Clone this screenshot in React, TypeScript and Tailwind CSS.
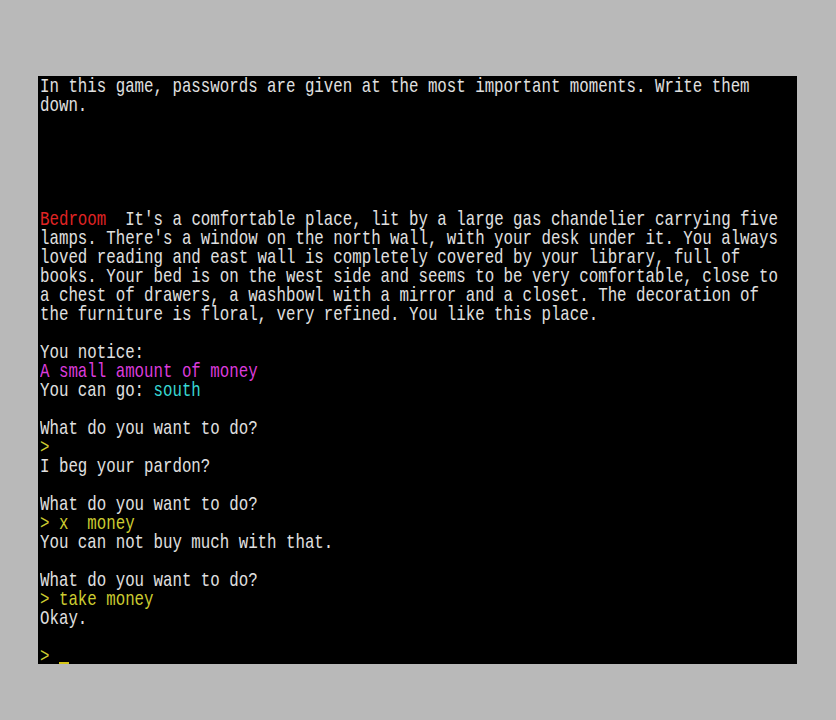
import React from "react";

type Seg = { t: string; c?: string };
type Line = Seg[];

const W = "text-[#e0e0e0]";
const RED = "text-[#e02424]";
const MAG = "text-[#dc3cdc]";
const CYAN = "text-[#38d8d4]";
const YEL = "text-[#cccc30]";

const lines: Line[] = [
  [{ t: "In this game, passwords are given at the most important moments. Write them" }],
  [{ t: "down." }],
  [],
  [],
  [],
  [],
  [],
  [{ t: "Bedroom", c: RED }, { t: "  It's a comfortable place, lit by a large gas chandelier carrying five" }],
  [{ t: "lamps. There's a window on the north wall, with your desk under it. You always" }],
  [{ t: "loved reading and east wall is completely covered by your library, full of" }],
  [{ t: "books. Your bed is on the west side and seems to be very comfortable, close to" }],
  [{ t: "a chest of drawers, a washbowl with a mirror and a closet. The decoration of" }],
  [{ t: "the furniture is floral, very refined. You like this place." }],
  [],
  [{ t: "You notice:" }],
  [{ t: "A small amount of money", c: MAG }],
  [{ t: "You can go: " }, { t: "south", c: CYAN }],
  [],
  [{ t: "What do you want to do?" }],
  [{ t: ">", c: YEL }],
  [{ t: "I beg your pardon?" }],
  [],
  [{ t: "What do you want to do?" }],
  [{ t: "> x  money", c: YEL }],
  [{ t: "You can not buy much with that." }],
  [],
  [{ t: "What do you want to do?" }],
  [{ t: "> take money", c: YEL }],
  [{ t: "Okay." }],
  [],
];

export default function App() {
  return (
    <div className="w-[836px] h-[720px] bg-[#b9b9b9] pt-[76px] pl-[38px] overflow-hidden">
      <div
        className="w-[759px] h-[588px] bg-black overflow-hidden pl-[2px] whitespace-pre text-[15.78px] leading-[19px]"
        style={{ fontFamily: '"Liberation Mono", "DejaVu Sans Mono", monospace' }}
      >
        {lines.map((ln, i) => (
          <div key={i} className="h-[19px]">
            <span className="inline-block scale-y-[1.28] origin-[50%_20%]">
              {ln.length === 0 ? " " : ln.map((s, j) => (
                <span key={j} className={s.c ?? W}>{s.t}</span>
              ))}
            </span>
          </div>
        ))}
        <div className="h-[19px] flex items-end">
          <span className={`inline-block scale-y-[1.28] origin-[50%_20%] self-start ${YEL}`}>{"> "}</span>
          <div className="w-[10px] h-[4px] bg-[#d4c418] mb-[-1px]" />
        </div>
      </div>
    </div>
  );
}
